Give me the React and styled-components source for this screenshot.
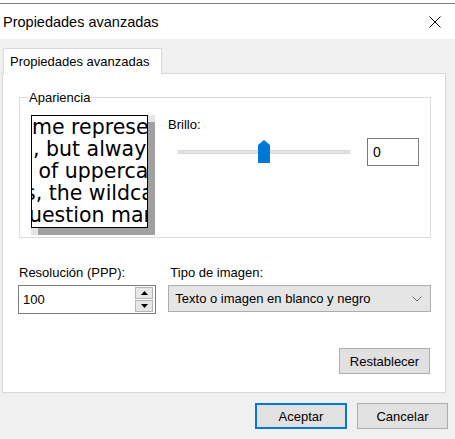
import React from 'react';
import styled, { createGlobalStyle } from 'styled-components';

const GlobalStyle = createGlobalStyle`
    * { box-sizing: border-box; }
    body {
        margin: 0;
        font-family: "Liberation Sans", Arial, sans-serif;
        font-size: 13px;
        color: #000;
        background: #f0f0f0;
    }
`;

const Window = styled.div`
    width: 455px;
    height: 439px;
    background: #f0f0f0;
    overflow: hidden;
`;

const BehindStrip = styled.div`
    height: 4px;
    background: #fff;
    border-bottom: 1px solid #7d7d7d;
`;

const TitleBar = styled.div`
    height: 35px;
    background: #fff;
    display: flex;
    align-items: center;
    justify-content: space-between;
    padding: 0 14px 0 3px;
`;

const Title = styled.span`
    font-size: 14.5px;
`;

const CloseButton = styled.button`
    border: 0;
    padding: 0;
    background: none;
    width: 12px;
    height: 12px;
    display: flex;
`;

const Body = styled.div`
    padding: 9px 0 0 2px;
`;

const TabStrip = styled.div`
    display: flex;
`;

const Tab = styled.div`
    position: relative;
    z-index: 1;
    margin-left: 1px;
    margin-bottom: -1px;
    width: 159px;
    height: 26px;
    padding-left: 6px;
    display: flex;
    align-items: center;
    background: #fff;
    border: 1px solid #d9d9d9;
    border-bottom: 0;
`;

const Panel = styled.div`
    width: 444px;
    height: 320px;
    background: #fff;
    border: 1px solid #d9d9d9;
    padding: 23px 14px 0 16px;
    display: flex;
    flex-direction: column;
`;

const GroupBox = styled.div`
    position: relative;
    height: 141px;
    border: 1px solid #dcdcdc;
    padding: 17px 0 0 11px;
    display: flex;
`;

const Legend = styled.span`
    position: absolute;
    top: -8px;
    left: 8px;
    padding: 0 1px;
    background: #fff;
    line-height: 15px;
`;

const Preview = styled.div`
    width: 117px;
    height: 113px;
    border: 1px solid #000;
    background: #fff;
    overflow: hidden;
    box-shadow: 7px 7px 0 #a0a0a0, 7px 0 0 #e6e6e6, 0 7px 0 #e6e6e6;
    font-family: "DejaVu Sans", Verdana, sans-serif;
    font-size: 20.5px;
    line-height: 22px;
`;

const PreviewLine = styled.div`
    white-space: pre;
    margin-left: ${p => p.$shift}px;
`;

const BrightnessCol = styled.div`
    margin-left: 20px;
    display: flex;
    flex-direction: column;
`;

const Label = styled.div`
    line-height: 16px;
    height: 16px;
    padding-left: ${p => p.$indent || 0}px;
`;

const SliderRow = styled.div`
    margin-top: 5px;
    height: 28px;
    display: flex;
    align-items: center;
`;

const Slider = styled.div`
    position: relative;
    margin-left: 10px;
    width: 172px;
    height: 28px;
    display: flex;
    align-items: center;
`;

const Track = styled.div`
    width: 100%;
    height: 4px;
    background: #e3e3e3;
    border: 1px solid #d8d8d8;
`;

const Thumb = styled.div`
    position: absolute;
    top: 2px;
    width: 12px;
    height: 23px;
    transform: translateX(-50%);
    background: #0078d7;
    clip-path: polygon(0 5px, 50% 0, 100% 5px, 100% 100%, 0 100%);
`;

const ValueBox = styled.div`
    margin-left: 17px;
    width: 52px;
    height: 28px;
    border: 1px solid #7a7a7a;
    padding-left: 5px;
    display: flex;
    align-items: center;
    font-size: 14px;
`;

const FieldRow = styled.div`
    margin-top: 27px;
    display: flex;
    gap: 12px;
`;

const Field = styled.div`
    width: ${p => p.$width}px;
    display: flex;
    flex-direction: column;
    gap: 4px;
`;

const NumberBox = styled.div`
    margin-left: -1px;
    height: 29px;
    border: 1px solid #7a7a7a;
    padding: 0 2px 0 4px;
    display: flex;
    align-items: center;
    justify-content: space-between;
`;

const Spinner = styled.div`
    display: flex;
    flex-direction: column;
    gap: 1px;
`;

const SpinButton = styled.div`
    width: 18px;
    height: 12px;
    background: #e6e6e6;
    border: 1px solid #b4b4b4;
    display: flex;
    align-items: center;
    justify-content: center;
`;

const Select = styled.div`
    height: 27px;
    background: #e5e5e5;
    border: 1px solid #adadad;
    padding: 0 8px 0 6px;
    display: flex;
    align-items: center;
    justify-content: space-between;
`;

const Button = styled.button`
    width: ${p => p.$width || 91}px;
    height: 26px;
    padding: 0;
    font-family: inherit;
    font-size: 13px;
    color: #000;
    background: #e1e1e1;
    border: 1px solid ${p => (p.$default ? '#0078d7' : '#adadad')};
    box-shadow: ${p => (p.$default ? 'inset 0 0 0 1px #0078d7' : 'none')};
`;

const ResetRow = styled.div`
    margin-top: 34px;
    display: flex;
    justify-content: flex-end;
    padding-right: 1px;
`;

const Footer = styled.div`
    margin-top: 10px;
    display: flex;
    justify-content: flex-end;
    gap: 10px;
    padding-right: 7px;
`;

const previewLines = [
    ['me represe', 0],
    [', but always', 1],
    [' of upperca', 0],
    ['s, the wildca', -7],
    ['uestion mark', -3],
];

const Triangle = ({ down }) => (
    <svg width="7" height="4" viewBox="0 0 7 4">
        <polygon points={down ? '0,0 7,0 3.5,4' : '0,4 7,4 3.5,0'} fill="#000" />
    </svg>
);

const App = () => {
    const brillo = 0;
    const pos = ((brillo + 100) / 200) * 100;

    return (
        <>
            <GlobalStyle />
            <Window>
                <BehindStrip />
                <TitleBar>
                    <Title>Propiedades avanzadas</Title>
                    <CloseButton aria-label="Cerrar">
                        <svg width="12" height="12" viewBox="0 0 12 12">
                            <path d="M0.5 0.5 L11.5 11.5 M11.5 0.5 L0.5 11.5" stroke="#000" strokeWidth="1" fill="none" />
                        </svg>
                    </CloseButton>
                </TitleBar>
                <Body>
                    <TabStrip>
                        <Tab>Propiedades avanzadas</Tab>
                    </TabStrip>
                    <Panel>
                        <GroupBox>
                            <Legend>Apariencia</Legend>
                            <Preview>
                                {previewLines.map(([text, shift]) => (
                                    <PreviewLine key={text} $shift={shift}>{text}</PreviewLine>
                                ))}
                            </Preview>
                            <BrightnessCol>
                                <Label style={{ marginTop: 2 }}>Brillo:</Label>
                                <SliderRow>
                                    <Slider>
                                        <Track />
                                        <Thumb style={{ left: `${pos}%` }} />
                                    </Slider>
                                    <ValueBox>{brillo}</ValueBox>
                                </SliderRow>
                            </BrightnessCol>
                        </GroupBox>
                        <FieldRow>
                            <Field $width={138}>
                                <Label>Resolución (PPP):</Label>
                                <NumberBox>
                                    <span>100</span>
                                    <Spinner>
                                        <SpinButton><Triangle /></SpinButton>
                                        <SpinButton><Triangle down /></SpinButton>
                                    </Spinner>
                                </NumberBox>
                            </Field>
                            <Field $width={264}>
                                <Label $indent={2}>Tipo de imagen:</Label>
                                <Select>
                                    <span>Texto o imagen en blanco y negro</span>
                                    <svg width="10" height="6" viewBox="0 0 10 6">
                                        <polyline points="0.5,0.5 5,5 9.5,0.5" stroke="#707070" strokeWidth="1" fill="none" />
                                    </svg>
                                </Select>
                            </Field>
                        </FieldRow>
                        <ResetRow>
                            <Button $width={91}>Restablecer</Button>
                        </ResetRow>
                    </Panel>
                    <Footer>
                        <Button $width={92} $default>Aceptar</Button>
                        <Button $width={91}>Cancelar</Button>
                    </Footer>
                </Body>
            </Window>
        </>
    );
};

export default App;
